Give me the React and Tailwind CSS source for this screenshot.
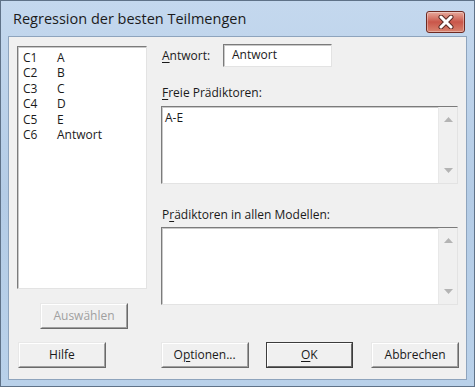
import React from "react";

const columns = [
  { id: "C1", name: "A" },
  { id: "C2", name: "B" },
  { id: "C3", name: "C" },
  { id: "C4", name: "D" },
  { id: "C5", name: "E" },
  { id: "C6", name: "Antwort" },
];

// sunken white field, like a classic edit box
const fieldClass =
  "bg-white border border-t-[#7b7b7b] border-l-[#7b7b7b] border-b-[#e3e3e3] border-r-[#e3e3e3] shadow-[inset_1px_1px_0_#c9c9c9]";

const ScrollArrows = () => (
  <div className="w-[19px] h-full bg-[#f0f0f0] border-l border-[#e8e8e8] flex flex-col items-center justify-between pt-[10px] pb-[10px]">
    <svg width="9" height="5" viewBox="0 0 9 5">
      <polygon points="0,5 9,5 4.5,0" fill="#b4b4b4" />
    </svg>
    <svg width="9" height="5" viewBox="0 0 9 5">
      <polygon points="0,0 9,0 4.5,5" fill="#b4b4b4" />
    </svg>
  </div>
);

const Button = ({ children, isDefault, disabled, className = "" }) => (
  <div
    className={`w-[88px] h-[26px] ${
      isDefault ? "border border-[#3c3c3c]" : "border border-t-[#e8e8e8] border-l-[#e8e8e8] border-b-[#6a6a6a] border-r-[#6a6a6a]"
    } ${className}`}
  >
    <div
      className={`w-full h-full flex items-center justify-center text-[12px] bg-[#f0f0f0] ${
        isDefault
          ? "border border-t-[#ffffff] border-l-[#ffffff] border-b-[#6a6a6a] border-r-[#6a6a6a]"
          : "border border-t-white border-l-white border-b-[#a0a0a0] border-r-[#a0a0a0]"
      } ${disabled ? "text-[#a0a0a0]" : "text-[#1a1a1a]"}`}
    >
      {children}
    </div>
  </div>
);

export default function App() {
  return (
    <div
      className="w-[475px] h-[387px] flex flex-col border border-[#5f7288] bg-gradient-to-b from-[#c4d8ee] via-[#b4cce6] to-[#b9d1ea] px-[7px] pb-[6px]"
      style={{ fontFamily: '"Open Sans", "Noto Sans", sans-serif' }}
    >
      {/* Title bar */}
      <div className="h-[35px] flex items-start justify-between">
        <div className="pl-[5px] pt-[8px] text-[14.5px] leading-[20px] text-[#1b1b1b]">
          Regression der besten Teilmengen
        </div>
        <div className="mt-[10px] mr-[2px] w-[39px] h-[22px] rounded-[3px] border border-[#6e2a22] bg-gradient-to-b from-[#e6a99c] via-[#c9564a] to-[#d9836f] flex items-center justify-center shadow-[inset_0_0_0_1px_rgba(255,255,255,0.35)]">
          <svg width="16" height="14" viewBox="0 0 16 14">
            <path d="M3 2 L13 12 M13 2 L3 12" stroke="#5a2a24" strokeWidth="5" strokeLinecap="round" />
            <path d="M3 2 L13 12 M13 2 L3 12" stroke="#ffffff" strokeWidth="3" strokeLinecap="round" />
          </svg>
        </div>
      </div>

      {/* Client area */}
      <div
        className="flex-1 bg-[#f0f0f0] border border-[#8ea4bd] pt-[7px] pl-[8px] pr-[7px] flex flex-col text-[12px] text-[#1a1a1a]"
      >
        <div className="flex h-[286px]">
          {/* Columns list */}
          <div className="w-[130px] flex flex-col">
            <div className={`mt-[2px] h-[243px] ${fieldClass} pt-[3px] pl-[5px]`}>
              {columns.map((c) => (
                <div key={c.id} className="flex h-[15.4px] leading-[15.4px]">
                  <span className="w-[34px]">{c.id}</span>
                  <span>{c.name}</span>
                </div>
              ))}
            </div>
            <Button disabled className="mt-[14px] ml-[23px]">
              Auswählen
            </Button>
          </div>

          {/* Right side */}
          <div className="ml-[14px] w-[297px] flex flex-col">
            <div className="flex items-center h-[23px]">
              <span className="w-[62px] pl-[1px]">
                <span className="underline underline-offset-2">A</span>ntwort:
              </span>
              <div className={`w-[109px] h-[23px] ${fieldClass} pl-[8px] leading-[20px]`}>Antwort</div>
            </div>

            <div className="mt-[18px] h-[16px] leading-[16px] pl-[1px]">
              <span className="underline underline-offset-2">F</span>reie Prädiktoren:
            </div>
            <div className={`mt-[5px] h-[78px] flex ${fieldClass}`}>
              <div className="flex-1 pl-[3px] pt-[3px] leading-[16px]">A-E</div>
              <ScrollArrows />
            </div>

            <div className="mt-[23px] h-[16px] leading-[16px] pl-[1px]">
              P<span className="underline underline-offset-2">r</span>ädiktoren in allen Modellen:
            </div>
            <div className={`mt-[4px] h-[78px] flex ${fieldClass}`}>
              <div className="flex-1" />
              <ScrollArrows />
            </div>
          </div>
        </div>

        {/* Bottom buttons */}
        <div className="mt-[12px] flex pl-[1px]">
          <Button>Hilfe</Button>
          <Button className="ml-[55px]">
            <span>
              O<span className="underline underline-offset-2">p</span>tionen...
            </span>
          </Button>
          <Button isDefault className="ml-[17px]">
            <span>
              <span className="underline underline-offset-2">O</span>K
            </span>
          </Button>
          <Button className="ml-[18px]">Abbrechen</Button>
        </div>
      </div>
    </div>
  );
}
